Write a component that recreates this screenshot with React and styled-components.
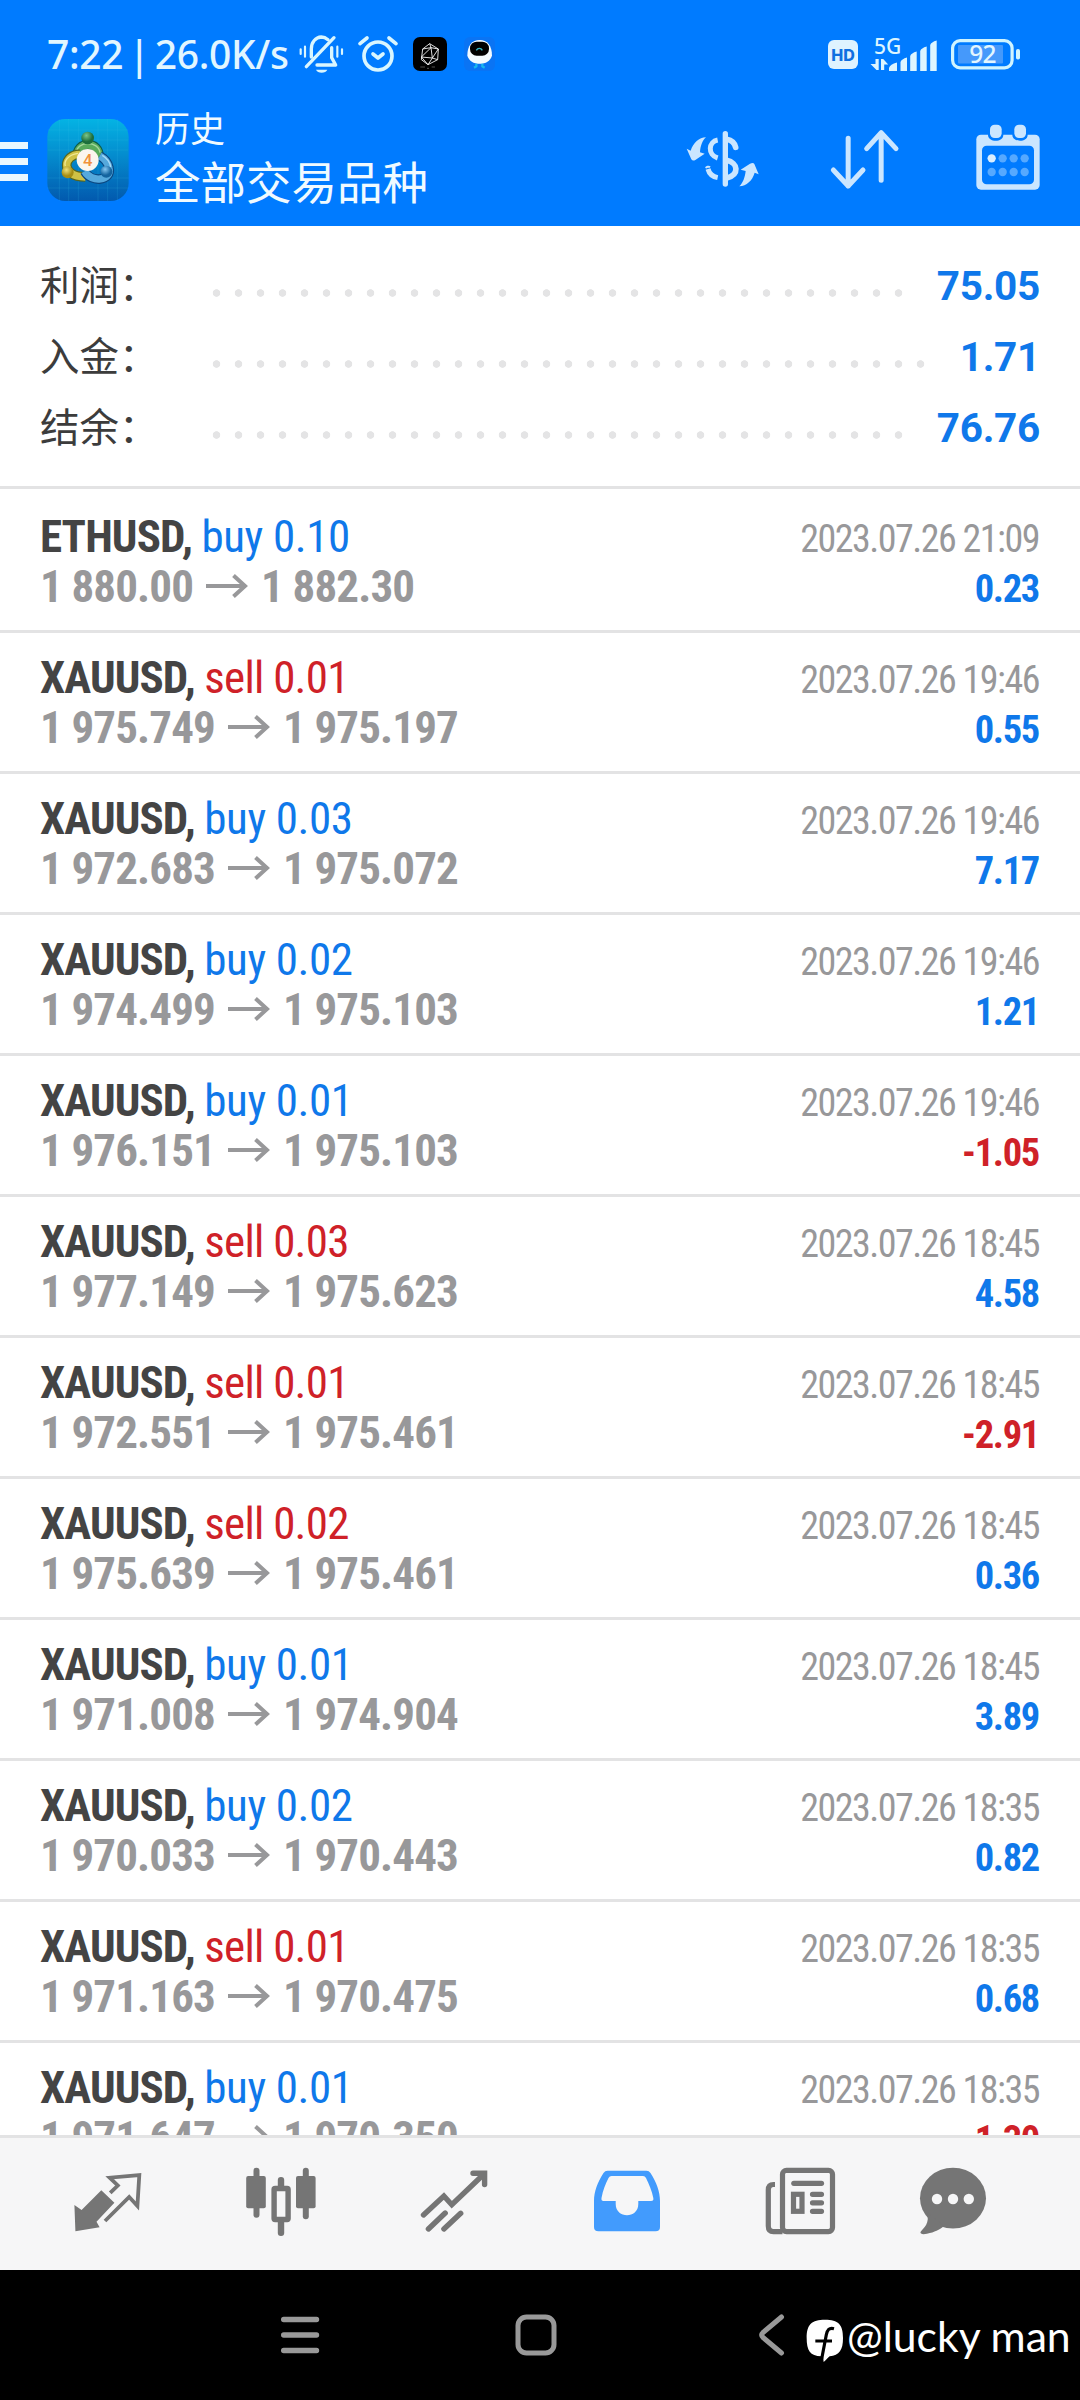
import React from "react";
import styled, { createGlobalStyle } from "styled-components";

const Global = createGlobalStyle`
  * { box-sizing: border-box; }
  body { margin: 0; background: #fff; }
  svg { display: block; flex: none; overflow: visible; }
`;

const blue = "#007bff";
const link = "#0f78ea";
const red = "#cf2128";
const line = "#e3e3e4";

const Screen = styled.div`
  width: 1080px;
  height: 2400px;
  display: flex;
  flex-direction: column;
  overflow: hidden;
  background: #fff;
  font-family: Roboto, "Noto Sans CJK SC", sans-serif;
`;

const Header = styled.header`
  flex: none;
  height: 226px;
  background: ${blue};
  color: #e2f6ff;
`;

const StatusBar = styled.div`
  height: 108px;
  padding: 0 59px 0 47px;
  display: flex;
  align-items: center;
`;

const Clock = styled.div`
  width: 252px;
  font: 500 39px/48px "Noto Sans", sans-serif;
  letter-spacing: -0.35px;
  word-spacing: -4.5px;
  white-space: nowrap;
`;

const StatusIcons = styled.div`
  display: flex;
  align-items: center;
`;

const StatusRight = styled.div`
  margin-left: auto;
  display: flex;
  align-items: center;
`;

const Toolbar = styled.div`
  height: 118px;
  display: flex;
  align-items: flex-start;
`;

const MenuButton = styled.div`
  width: 28px;
  margin-top: 34px;
  display: flex;
  flex-direction: column;
  gap: 9px;
`;

const MenuBar = styled.span`
  height: 7px;
  background: #e9f7ff;
`;

const AppBadge = styled.div`
  margin: 11px 26px 0 19px;
`;

const Titles = styled.div`
  width: 531px;
  white-space: nowrap;
  font-family: "Noto Sans CJK SC", sans-serif;
  color: #f0faff;
`;

const Caption = styled.div`
  font-size: 35px;
  line-height: 38px;
`;

const Title = styled.div`
  font-size: 45.5px;
  line-height: 68px;
`;

const Actions = styled.div`
  display: flex;
  align-items: flex-start;
  padding-top: 16px;
`;

const Action = styled.div`
  margin: ${(p) => p.$m};
`;

const Summary = styled.section`
  flex: none;
  height: 263px;
  padding: 24px 40px 0;
  border-bottom: 3px solid ${line};
`;

const SummaryRow = styled.div`
  height: 71px;
  display: flex;
  align-items: center;
`;

const SummaryLabel = styled.div`
  width: 165px;
  font: 400 39.5px/60px "Noto Sans CJK SC", sans-serif;
  color: #3c3c3c;
  white-space: nowrap;
  padding-bottom: 5px;
`;

const Leader = styled.div`
  width: ${(p) => p.$dots * 22}px;
  height: 8px;
  margin-top: 15px;
  background: radial-gradient(circle at 11.5px 4px, #e4e4e5 3.4px, transparent 4.1px) 0 0 / 22px 8px repeat-x;
`;

const SummaryValue = styled.div`
  margin-left: auto;
  font-weight: 700;
  font-size: 40.5px;
  letter-spacing: -0.3px;
  line-height: 60px;
  color: ${link};
`;

const List = styled.section`
  flex: 1;
  min-height: 0;
  overflow: hidden;
  padding-top: 3px;
`;

const Deal = styled.article`
  height: 141px;
  padding: 20px 40px 0;
  border-bottom: 3px solid ${line};
  font-family: "Roboto Condensed", Roboto, sans-serif;
`;

const DealLine = styled.div`
  height: 50px;
  line-height: 50px;
  display: flex;
  align-items: baseline;
  justify-content: space-between;
  white-space: pre;
`;

const Symbol = styled.span`
  font-size: 45px;
  font-weight: 700;
  letter-spacing: -0.9px;
  color: #444;
`;

const Side = styled.span`
  font-size: 45px;
  font-weight: 400;
  letter-spacing: ${(p) => (p.$sell ? -0.75 : -0.4)}px;
  color: ${(p) => (p.$sell ? red : link)};
`;

const When = styled.span`
  font-size: 38px;
  letter-spacing: -1.5px;
  margin-right: 1px;
  color: #98989a;
`;

const Prices = styled.span`
  display: flex;
  align-items: baseline;
  gap: 13px;
  font-size: 45px;
  font-weight: 700;
  letter-spacing: -0.85px;
  color: #98989a;
`;

const Profit = styled.span`
  font-size: 38.5px;
  font-weight: 700;
  letter-spacing: -1.3px;
  margin-right: 1px;
  color: ${(p) => (p.$loss ? red : link)};
`;

const Tabs = styled.nav`
  flex: none;
  height: 135px;
  padding: 0 21px;
  display: flex;
  border-top: 3px solid ${line};
  background: #f6f6f7;
`;

const Tab = styled.div`
  width: ${(p) => (p.$last ? 132 : 173.2)}px;
  display: flex;
  justify-content: center;
  padding-top: 29px;
`;

const SystemBar = styled.footer`
  position: relative;
  flex: none;
  height: 130px;
  background: #000;
  display: flex;
  align-items: center;
  padding: 0 0 0 280px;
`;

const SystemKey = styled.div`
  margin-right: ${(p) => p.$gap}px;
`;

const Watermark = styled.div`
  position: absolute;
  left: 806px;
  top: 49px;
  display: flex;
  align-items: flex-start;
  gap: 3px;
  color: #fff;
`;

const Handle = styled.span`
  margin-top: -10px;
  font: 400 42.7px/54px Lato, sans-serif;
  white-space: nowrap;
`;

const MuteIcon = () => (
  <svg width="45" height="40" viewBox="56 29 135 120" fill="none" stroke="#d9f6ff" strokeWidth="10" strokeLinecap="round" strokeLinejoin="round">
    <g strokeWidth="6.5">
      <path d="M61 75V89M74 67V97M171 67V97M185 75V89" />
    </g>
    <path d="M93 98V74C93 53 106 39 123 38c7 0 14 3 20 8" />
    <path d="M154 70V100L166 122H110M78 127L161 40" />
    <path d="M107 136h34c-4 12-30 12-34 0z" fill="#d9f6ff" stroke="none" />
  </svg>
);

const AlarmIcon = () => (
  <svg width="40" height="38" viewBox="233 30 120 114" fill="none" stroke="#d9f6ff" strokeWidth="11" strokeLinecap="round" strokeLinejoin="round">
    <circle cx="293" cy="93" r="42" />
    <path d="M278 87l15 12 15-12M239 56l21-17M326 39l21 17" />
  </svg>
);

const GemIcon = () => (
  <svg width="34" height="34" viewBox="396 36 102 102" fill="none" stroke="#fff" strokeWidth="2.6">
    <rect x="396" y="36" width="102" height="102" rx="21" fill="#000" stroke="none" />
    <path d="M446 56L472 72 470 104 441 119 421 104 425 72zM446 56L450 68 472 72M450 68L421 96 454 99zM454 99L470 104M421 96L441 119 454 99 472 72M425 72L450 68" />
    <path d="M418 126h14M438 130h6M452 126h10" strokeWidth="1.6" opacity=".6" />
  </svg>
);

const RobotIcon = () => (
  <svg width="31" height="34" viewBox="551 36 93 102">
    <rect x="551" y="36" width="93" height="102" rx="18" fill="#0a74f4" />
    <path d="M561 92c0-30 14-47 37-47s37 17 37 47c-6 16-18 24-37 24s-31-8-37-24z" fill="#f4fbff" />
    <rect x="569" y="50" width="57" height="42" rx="20" fill="#000" />
    <path d="M588 76c4-8 14-8 18 0" fill="none" stroke="#35b6c4" strokeWidth="4" />
    <path d="M588 116v8l-7 4M606 116v8l7 4" fill="none" stroke="#19b7ee" strokeWidth="7" />
  </svg>
);

const HdIcon = () => (
  <svg width="30" height="29" viewBox="0 0 30 29">
    <rect width="30" height="29" rx="6" fill="#dff3ff" />
    <text x="15" y="20.500" textAnchor="middle" fontFamily="Inter, sans-serif" fontWeight="800" fontSize="16" fill="#0f6fe0">HD</text>
  </svg>
);

const SignalIcon = () => (
  <svg width="68" height="36" viewBox="870 35 68 36" fill="#dcf5ff">
    <text x="874" y="52.500" fontFamily="Noto Sans, sans-serif" fontSize="21" fontWeight="500">5G</text>
    <path d="M875.500 58h3.200v11h-2.200l-6-6h5zM881 69V58h2.200l5 5.500h-4V69z" />
    <path d="M889 70v-3q1-4 8-5.500v8.500zM900.500 70V61q1-3 6.500-4.500V70zM910.200 70V55q1-3 6.500-4.500V70zM920.200 70V50q1-3 6.500-4.500V70zM930.200 70V44q1-3 6.500-4.500V70z" />
  </svg>
);

const BatteryIcon = () => (
  <svg width="70" height="31" viewBox="951 39 70 31">
    <rect x="952.600" y="40.600" width="59.500" height="27.200" rx="7.500" fill="none" stroke="#d0f4ff" strokeWidth="3.200" />
    <rect x="958" y="45" width="45" height="18.500" rx="1" fill="#4599fb" />
    <rect x="1016" y="49" width="4" height="10.500" rx="1.800" fill="#d0f4ff" />
    <text x="982.500" y="63" textAnchor="middle" fontFamily="Noto Sans, sans-serif" fontSize="24.500" fontWeight="500" letterSpacing="-.8" fill="#e2f6ff">92</text>
  </svg>
);

const AppIcon = () => (
  <svg width="82" height="82" viewBox="54 27 244 246">
    <defs>
      <linearGradient id="sky" x1="0" y1="0" x2="0" y2="1">
        <stop offset="0" stopColor="#04b3e4" />
        <stop offset=".5" stopColor="#0487cb" />
        <stop offset="1" stopColor="#0259ae" />
      </linearGradient>
      <radialGradient id="gr" cx=".4" cy=".3"><stop offset="0" stopColor="#7cc58a" /><stop offset="1" stopColor="#1c6e3c" /></radialGradient>
      <radialGradient id="ye" cx=".4" cy=".3"><stop offset="0" stopColor="#efe27a" /><stop offset="1" stopColor="#a68d14" /></radialGradient>
      <radialGradient id="bl" cx=".4" cy=".3"><stop offset="0" stopColor="#86c8f2" /><stop offset="1" stopColor="#14649f" /></radialGradient>
    </defs>
    <rect x="54" y="27" width="244" height="246" rx="54" fill="url(#sky)" />
    <path d="M90 28V272M118 27V273M147 27V273M206 27V273M235 27V273M264 28V272M55 60H297M55 90H297M55 120H297M54 204H298M54 234H298" stroke="#3fc0ea" strokeOpacity=".2" strokeWidth="2.500" />
    <g fill="none" strokeLinejoin="round">
      <path d="M145 142C138 92 214 92 208 142" stroke="#0d5c4a" strokeWidth="30" />
      <path d="M145 142C138 92 214 92 208 142" stroke="#58ab5c" strokeWidth="23" />
      <path d="M141 128C143 92 208 92 212 128" stroke="#a5d79b" strokeWidth="4" />
      <path d="M152 133C102 132 90 200 168 201" stroke="#57661e" strokeWidth="29" />
      <path d="M152 133C102 132 90 200 168 201" stroke="#cfc145" strokeWidth="22" />
      <path d="M146 130C112 134 104 158 108 168" stroke="#f1e995" strokeWidth="4" />
      <path d="M166 184C186 220 248 212 239 174 236 158 224 145 211 138" stroke="#0b4780" strokeWidth="29" />
      <path d="M166 184C186 220 248 212 239 174 236 158 224 145 211 138" stroke="#56a9dc" strokeWidth="22" />
      <path d="M219 136C236 146 243 160 244 172" stroke="#a9daf6" strokeWidth="4" />
    </g>
    <circle cx="175" cy="84" r="19" fill="url(#gr)" />
    <circle cx="115" cy="187" r="18" fill="url(#ye)" />
    <circle cx="231" cy="185" r="18" fill="url(#bl)" />
    <circle cx="175" cy="150" r="33" fill="#fbf6ee" />
    <text x="175" y="168" textAnchor="middle" fontFamily="Roboto, sans-serif" fontWeight="500" fontSize="50" fill="#f0923c">4</text>
  </svg>
);

const DollarIcon = () => (
  <svg width="74" height="58" viewBox="46 59 222 174" fill="#cbe6ff">
    <path d="M48 115L60 121C68 97 85 82 106 81C95 90 89 108 88 126L102 130 74 149Q66 153 62 147Z" />
    <path d="M264 192L252 187C245 211 228 226 206 228C217 218 223 200 225 182L210 178 238 160Q248 156 251 161Z" />
    <rect x="156" y="62" width="16" height="167" rx="8" />
    <g fill="none" stroke="#cbe6ff">
      <path d="M141 89C113 94 110 133 141 143" strokeWidth="15" />
      <path d="M112 176C116 191 126 199 141 202" strokeWidth="15" />
      <path d="M106 174a7 6 0 0 1 12-3" strokeWidth="6" />
      <path d="M168 87C184 90 192 98 195 111" strokeWidth="17" strokeLinecap="round" />
      <path d="M168 150C203 158 207 192 168 203" strokeWidth="17" />
    </g>
  </svg>
);

const SortIcon = () => (
  <svg width="70" height="62" viewBox="481 58 210 186" fill="none" stroke="#cbe6ff" strokeWidth="15" strokeLinecap="round" strokeLinejoin="round">
    <path d="M535.500 86V229M491 181L535.500 229 580 181M634.500 212V70M591 117L634.500 69 679 117" />
  </svg>
);

const CalendarIcon = () => (
  <svg width="64" height="66" viewBox="919 46 192 198">
    <rect x="920" y="78" width="190" height="165" rx="14" fill="#cbe6ff" />
    <rect x="937" y="111" width="156" height="116" rx="14" fill={blue} />
    {[961, 1034].map((x) => (
      <g key={x}>
        <path d={`M${x - 6} 76h46v2c0 24-46 24-46 0z`} fill={blue} />
        <rect x={x} y="48" width="35" height="40" rx="14" fill="#cbe6ff" />
      </g>
    ))}
    {[149, 190].map((y) =>
      [966, 999, 1032, 1065].map((x) => (
        <circle key={x + "-" + y} cx={x} cy={y} r="12.500" fill={x + y === 1115 ? "#dcefff" : "#56a9ff"} />
      ))
    )}
  </svg>
);

const Arrow = () => (
  <svg width="42" height="24" viewBox="0 0 42 24" fill="none" stroke="#98989a" strokeWidth="4">
    <path d="M0 12H39M27.500 1.500L39 12 27.500 22.500" />
  </svg>
);

const ArrowBox = styled.span`
  align-self: flex-start;
  margin-top: 12px;
`;

const QuotesIcon = () => (
  <svg width="70" height="68" viewBox="74 2167 70 68" fill="#757575">
    <path d="M75.400 2205L82.600 2210 102.300 2190.300 115.400 2202.700 97.500 2221.700 100.600 2227.300 76.400 2231.300z" />
    <path d="M111.200 2192.800L118.800 2185.500 110.700 2177.700 140.300 2175.200 138.400 2206 130.200 2197 106 2221" fill="none" stroke="#757575" strokeWidth="3.800" />
  </svg>
);

const CandlesIcon = () => (
  <svg width="72" height="70" viewBox="245 2167 72 70" fill="#757575">
    <rect x="253.500" y="2167.700" width="6" height="50" rx="3" />
    <rect x="246.200" y="2176" width="19.600" height="32.300" rx="2" />
    <rect x="277.800" y="2177" width="6.400" height="13" rx="3" />
    <rect x="277.800" y="2218" width="6.400" height="18" rx="3" />
    <rect x="274.100" y="2188.500" width="14" height="31" rx="1" fill="none" stroke="#757575" strokeWidth="5.400" />
    <rect x="302.800" y="2167.700" width="6" height="51.500" rx="3" />
    <rect x="296" y="2176" width="19.600" height="32.300" rx="2" />
  </svg>
);

const TrendIcon = () => (
  <svg width="70" height="68" viewBox="419 2167 70 68" fill="none" stroke="#757575" strokeWidth="5.400" strokeLinecap="round">
    <path d="M423.500 2215L443.900 2196 451.800 2204.700 484 2174" />
    <path d="M473 2173.300H484.600V2184.500" />
    <path d="M428.400 2229L445.200 2213M443.900 2229L460.700 2213.300" />
  </svg>
);

const InboxIcon = () => (
  <svg width="70" height="68" viewBox="592.500 2167 70 68">
    <path
      fillRule="evenodd"
      fill="#429bfd"
      d="M608 2170.700H647Q649.500 2170.700 651 2173C657 2182 660.500 2192 660.500 2201V2227Q660.500 2231.300 656 2231.300H599Q594.500 2231.300 594.500 2227V2201C594.500 2192 598 2182 604 2173Q605.500 2170.700 608 2170.700ZM612 2176Q610 2176 609 2178C606 2184 603.500 2190 602 2198Q601.500 2201 604 2201H616.200V2204C616.200 2219 638.800 2219 638.800 2204V2201H651.500Q654.500 2201 653.800 2198C652.500 2191 649.500 2184 646.500 2178Q645.500 2176 643.500 2176Z"
    />
  </svg>
);

const NewsIcon = () => (
  <svg width="72" height="69" viewBox="764.500 2167 72 69" fill="none" stroke="#757575" strokeWidth="5.200" strokeLinecap="round">
    <rect x="783" y="2170.300" width="50" height="61.300" rx="4" />
    <path d="M775.500 2184.500H774Q768.800 2184.500 768.800 2190V2226Q768.800 2231.600 774 2231.600H783" strokeLinecap="butt" />
    <path d="M794.300 2183.300H822" />
    <rect x="794" y="2194.300" width="8.500" height="17" />
    <path d="M813 2194.300H822M813 2202.800H822M813 2211.300H822" />
  </svg>
);

const ChatIcon = () => (
  <svg width="70" height="68" viewBox="918 2167 70 68" fill="#757575">
    <ellipse cx="953" cy="2198.200" rx="33" ry="30.400" />
    <path d="M927 2212C930 2224 924 2227 920.500 2232Q920 2235 927 2233.800C935 2232 939 2230 944 2226Z" />
    {[937, 953, 968.8].map((x) => (
      <circle key={x} cx={x} cy="2199" r="5.200" fill="#f6f6f7" />
    ))}
  </svg>
);

const KeyMenu = () => (
  <svg width="40" height="42" viewBox="0 0 40 42" stroke="#999" strokeWidth="5.400" strokeLinecap="round">
    <path d="M3.700 5.500H36.500M3.700 21H36.500M3.700 36.500H36.500" />
  </svg>
);

const KeyHome = () => (
  <svg width="42" height="42" viewBox="0 0 42 42" fill="none" stroke="#999" strokeWidth="5">
    <rect x="3" y="3" width="36" height="36" rx="8.500" />
  </svg>
);

const KeyBack = () => (
  <svg width="27" height="42" viewBox="0 0 27 42" fill="none" stroke="#999" strokeWidth="5" strokeLinecap="round" strokeLinejoin="round">
    <path d="M23.500 3L5 18.500Q2.500 21 5 23.500L23.500 39" />
  </svg>
);

const MarkIcon = () => (
  <svg width="38" height="44" viewBox="78 58 114 132">
    <path d="M135 60C175 60 189 74 189 115 189 152 178 166 149 170 143 174 138 182 131 187L129 170H124C90 169 80 152 80 115 80 74 95 60 135 60Z" fill="#fff" />
    <path d="M162 87C147 83 142 91 139 105L125 178M106 124H156" fill="none" stroke="#000" strokeWidth="9.500" />
  </svg>
);

const totals = [
  ["利润", "75.05", 32],
  ["入金", "1.71", 33],
  ["结余", "76.76", 32],
];

const deals = [
  ["ETHUSD", "buy", "0.10", "1 880.00", "1 882.30", "21:09", "0.23"],
  ["XAUUSD", "sell", "0.01", "1 975.749", "1 975.197", "19:46", "0.55"],
  ["XAUUSD", "buy", "0.03", "1 972.683", "1 975.072", "19:46", "7.17"],
  ["XAUUSD", "buy", "0.02", "1 974.499", "1 975.103", "19:46", "1.21"],
  ["XAUUSD", "buy", "0.01", "1 976.151", "1 975.103", "19:46", "-1.05"],
  ["XAUUSD", "sell", "0.03", "1 977.149", "1 975.623", "18:45", "4.58"],
  ["XAUUSD", "sell", "0.01", "1 972.551", "1 975.461", "18:45", "-2.91"],
  ["XAUUSD", "sell", "0.02", "1 975.639", "1 975.461", "18:45", "0.36"],
  ["XAUUSD", "buy", "0.01", "1 971.008", "1 974.904", "18:45", "3.89"],
  ["XAUUSD", "buy", "0.02", "1 970.033", "1 970.443", "18:35", "0.82"],
  ["XAUUSD", "sell", "0.01", "1 971.163", "1 970.475", "18:35", "0.68"],
  ["XAUUSD", "buy", "0.01", "1 971.647", "1 970.350", "18:35", "-1.30"],
];

const tabs = [QuotesIcon, CandlesIcon, TrendIcon, InboxIcon, NewsIcon, ChatIcon];

export default function App() {
  return (
    <Screen>
      <Global />
      <Header>
        <StatusBar>
          <Clock>7:22 | 26.0K/s</Clock>
          <StatusIcons>
            <MuteIcon />
            <Action $m="0 15px 0 14px"><AlarmIcon /></Action>
            <GemIcon />
            <Action $m="0 0 0 17px"><RobotIcon /></Action>
          </StatusIcons>
          <StatusRight>
            <HdIcon />
            <Action $m="0 13px 0 12px"><SignalIcon /></Action>
            <BatteryIcon />
          </StatusRight>
        </StatusBar>
        <Toolbar>
          <MenuButton><MenuBar /><MenuBar /><MenuBar /></MenuButton>
          <AppBadge><AppIcon /></AppBadge>
          <Titles>
            <Caption>历史</Caption>
            <Title>全部交易品种</Title>
          </Titles>
          <Actions>
            <Action $m="6px 0 0 0"><DollarIcon /></Action>
            <Action $m="5px 76px 0 70px"><SortIcon /></Action>
            <Action $m="0"><CalendarIcon /></Action>
          </Actions>
        </Toolbar>
      </Header>
      <Summary>
        {totals.map(([label, value, dots]) => (
          <SummaryRow key={label}>
            <SummaryLabel>{label}：</SummaryLabel>
            <Leader $dots={dots} />
            <SummaryValue>{value}</SummaryValue>
          </SummaryRow>
        ))}
      </Summary>
      <List>
        {deals.map(([symbol, side, volume, open, close, time, profit], i) => (
          <Deal key={i}>
            <DealLine>
              <span>
                <Symbol>{symbol}, </Symbol>
                <Side $sell={side === "sell"}>{side} {volume}</Side>
              </span>
              <When>2023.07.26 {time}</When>
            </DealLine>
            <DealLine>
              <Prices>
                <span>{open}</span>
                <ArrowBox><Arrow /></ArrowBox>
                <span>{close}</span>
              </Prices>
              <Profit $loss={profit.startsWith("-")}>{profit}</Profit>
            </DealLine>
          </Deal>
        ))}
      </List>
      <Tabs>
        {tabs.map((Icon, i) => (
          <Tab key={i} $last={i === 5}><Icon /></Tab>
        ))}
      </Tabs>
      <SystemBar>
        <SystemKey $gap={195}><KeyMenu /></SystemKey>
        <SystemKey $gap={201}><KeyHome /></SystemKey>
        <KeyBack />
        <Watermark><MarkIcon /><Handle>@lucky man</Handle></Watermark>
      </SystemBar>
    </Screen>
  );
}
